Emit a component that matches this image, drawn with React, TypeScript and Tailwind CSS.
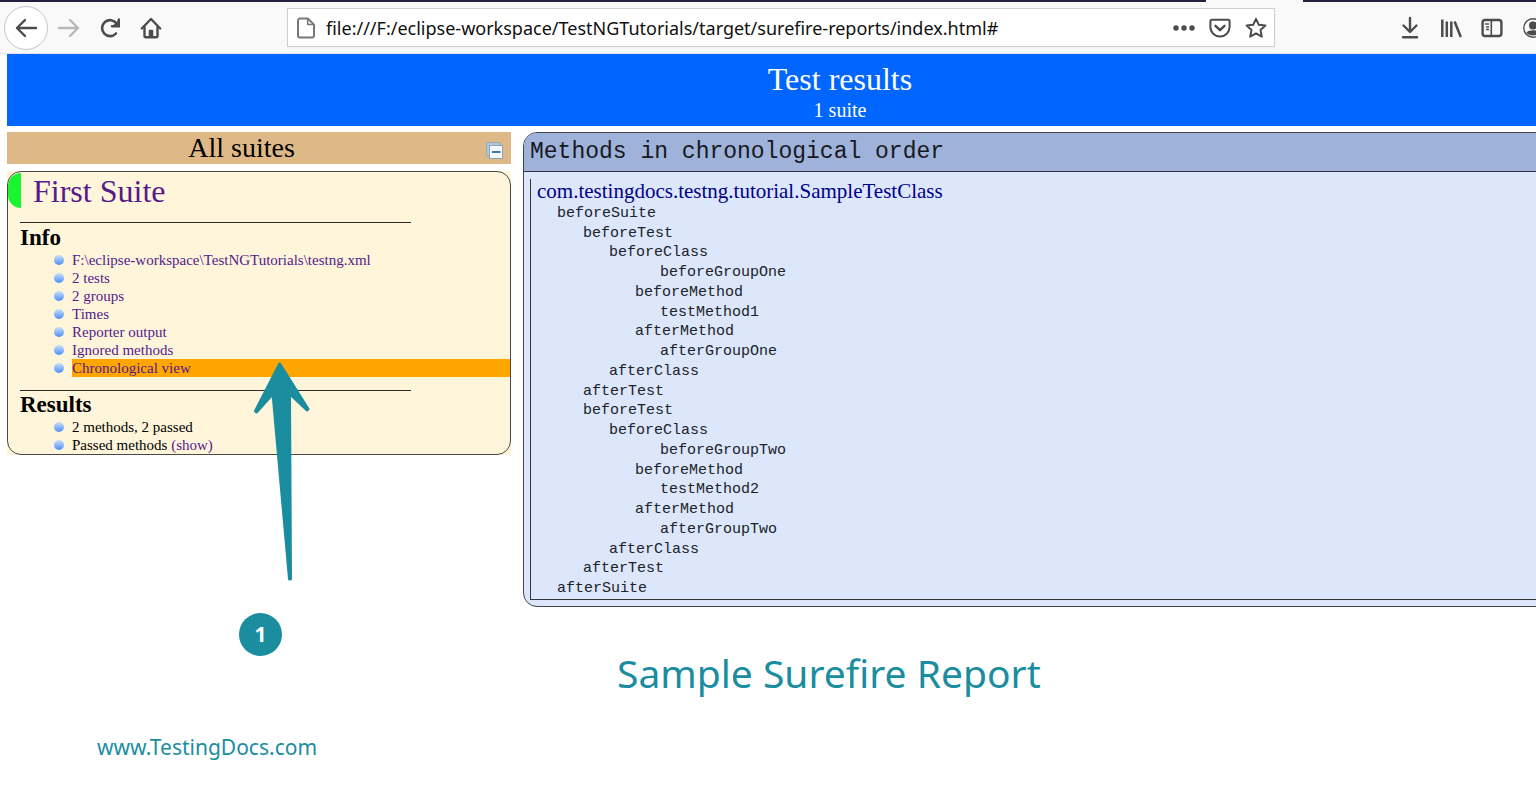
import type { ReactNode } from 'react';

const infoItems = [
    'F:\\eclipse-workspace\\TestNGTutorials\\testng.xml',
    '2 tests',
    '2 groups',
    'Times',
    'Reporter output',
    'Ignored methods',
    'Chronological view',
];

const indents = ['pl-[26px]', 'pl-[52px]', 'pl-[78px]', 'pl-[104px]', 'pl-[129px]'];

const methods: [number, string][] = [
    [0, 'beforeSuite'],
    [1, 'beforeTest'],
    [2, 'beforeClass'],
    [4, 'beforeGroupOne'],
    [3, 'beforeMethod'],
    [4, 'testMethod1'],
    [3, 'afterMethod'],
    [4, 'afterGroupOne'],
    [2, 'afterClass'],
    [1, 'afterTest'],
    [1, 'beforeTest'],
    [2, 'beforeClass'],
    [4, 'beforeGroupTwo'],
    [3, 'beforeMethod'],
    [4, 'testMethod2'],
    [3, 'afterMethod'],
    [4, 'afterGroupTwo'],
    [2, 'afterClass'],
    [1, 'afterTest'],
    [0, 'afterSuite'],
];

function IconButton({ label, children }: { label: string; children: ReactNode }) {
    return (
        <button type="button" aria-label={label} className="flex h-8 w-6 shrink-0 items-center justify-center">
            <svg
                width="24"
                height="24"
                viewBox="0 0 24 24"
                fill="none"
                stroke="currentColor"
                strokeWidth="2.4"
                strokeLinecap="round"
                strokeLinejoin="round"
            >
                {children}
            </svg>
        </button>
    );
}

function Toolbar() {
    return (
        <header className="bg-[#f9f9fa] text-[#4c4c4f]">
            {/* tab strip edge, open under the active tab */}
            <div className="flex h-0.5">
                <div className="flex-1 bg-[#232041]" />
                <div className="w-[97px]" />
                <div className="w-[233px] bg-[#232041]" />
            </div>
            <div className="flex h-[52px] items-center border-b border-[#e3e3e6]">
                <div className="flex w-[287px] shrink-0 items-center gap-[17px] pl-1">
                    <button
                        type="button"
                        aria-label="Back"
                        className="flex h-11 w-11 items-center justify-center rounded-full border border-[#c6c6c8] bg-white"
                    >
                        <svg width="24" height="24" viewBox="0 0 24 24" fill="none" stroke="currentColor" strokeWidth="2.4" strokeLinecap="round" strokeLinejoin="round">
                            <path d="M22 12H3M11 4 3 12l8 8" />
                        </svg>
                    </button>
                    <span className="-ml-2 flex text-[#b9b9bb]">
                        <IconButton label="Forward">
                            <path d="M2 12h19M13 4l8 8-8 8" />
                        </IconButton>
                    </span>
                    <IconButton label="Reload">
                        <path d="M18 17.5A8 8 0 1 1 18.600 7.500" strokeWidth="2.600" />
                        <path d="M20.800 3.500v6.800h-6.800" strokeLinejoin="miter" />
                        <path d="M20.800 4.500v5.800h-5.800z" fill="currentColor" strokeWidth="1" />
                    </IconButton>
                    <IconButton label="Home">
                        <path d="M2.800 12.500 12 3l9.200 9.500" />
                        <path d="M5.500 11v8.700q0 1.500 1.500 1.500h10q1.500 0 1.500-1.500V11" />
                        <path d="M10.500 19.500v-5h3v5z" fill="currentColor" strokeWidth="1.600" />
                    </IconButton>
                </div>
                <div className="flex h-[39px] flex-1 items-center border border-[#cfcfd1] bg-white pr-1.5 pl-1.5 shadow-xs">
                    <IconButton label="Page information">
                        <path d="M6 2.500h7.700L20 8.600v10.900a2 2 0 0 1-2 2H6a2 2 0 0 1-2-2V4.500a2 2 0 0 1 2-2z" stroke="#77777a" strokeWidth="2" />
                        <path d="M13.700 3v5.600H20" stroke="#77777a" strokeWidth="1.500" />
                    </IconButton>
                    <input
                        type="text"
                        aria-label="Address"
                        defaultValue="file:///F:/eclipse-workspace/TestNGTutorials/target/surefire-reports/index.html#"
                        className="ml-2 min-w-0 flex-1 bg-transparent pt-0.5 font-['Noto_Sans',sans-serif] text-[18px] text-[#111] outline-none"
                    />
                    <div className="flex items-center gap-3">
                        <IconButton label="Page actions">
                            <g fill="currentColor" stroke="none">
                                <circle cx="4" cy="12" r="2.700" />
                                <circle cx="12" cy="12" r="2.700" />
                                <circle cx="20" cy="12" r="2.700" />
                            </g>
                        </IconButton>
                        <IconButton label="Save to Pocket">
                            <path d="M3.700 3.800h16.600a1.300 1.300 0 0 1 1.300 1.300V11a9.600 9.600 0 0 1-19.200 0V5.100a1.300 1.300 0 0 1 1.300-1.300z" strokeWidth="2" />
                            <path d="m7.500 9.800 4.500 4.400 4.500-4.400" />
                        </IconButton>
                        <IconButton label="Bookmark">
                            <path d="m12 2.800 2.800 6 6.600.8-4.900 4.500 1.300 6.500-5.800-3.200-5.800 3.200 1.300-6.500-4.900-4.500 6.600-.8z" strokeWidth="2" />
                        </IconButton>
                    </div>
                </div>
                <div className="flex w-[261px] shrink-0 items-center gap-[17px] overflow-hidden pl-[123px]">
                    <IconButton label="Downloads">
                        <path d="M12 2v13.500M5.500 9.500l6.500 6.500 6.500-6.500M5 21.300h14" />
                    </IconButton>
                    <IconButton label="Library">
                        <path d="M3.300 3.500v17.500M7.800 5.500V21M12.300 5.500V21M15.600 5.500 21.800 21" strokeWidth="2.500" strokeLinecap="butt" />
                    </IconButton>
                    <IconButton label="Sidebars">
                        <rect x="2.600" y="4" width="18.800" height="16" rx="2.500" strokeWidth="2.400" />
                        <path d="M11.300 4v16" strokeWidth="1.600" />
                        <path d="M5.500 8h3M6.500 11h2M6.500 13.500h2" strokeWidth="1.300" />
                    </IconButton>
                    <IconButton label="Account">
                        <circle cx="12" cy="12" r="9.200" strokeWidth="1.400" />
                        <circle cx="12" cy="9.500" r="4" fill="currentColor" stroke="none" />
                        <path d="M5.500 16.500c2-3 11-3 13 0-2 4-11 4-13 0z" fill="currentColor" stroke="none" />
                    </IconButton>
                </div>
            </div>
        </header>
    );
}

function Bullet() {
    return <span className="mr-2 ml-[46px] h-2.5 w-2.5 shrink-0 rounded-full bg-linear-to-b from-[#cfe0f6] to-[#4a8bfa]" />;
}

function SuitePanel() {
    return (
        <div className="mt-[7px] bg-[#fff5db]">
            <div className="overflow-hidden rounded-[14px] border border-[#4a4842]">
                <div className="flex h-[37px] items-center">
                    <span className="h-[35px] w-[13px] rounded-l-[13px] bg-[#1bf52f]" />
                    <a href="#" className="ml-3 text-[32px] leading-9 text-[#551a8b]">First Suite</a>
                </div>
                <section className="mt-[13px]">
                    <hr className="ml-3 w-[391px] border-[#2d2b28]" />
                    <h3 className="ml-3 pt-px text-[23px] leading-[27px] font-bold">Info</h3>
                    <ul className="text-[15px] leading-[18px] text-[#551a8b]">
                        {infoItems.map((item) => (
                            <li key={item} className="flex items-center">
                                <Bullet />
                                <span className={item === 'Chronological view' ? 'flex-1 bg-[#ffa500]' : 'flex-1'}>
                                    <a href="#">{item}</a>
                                </span>
                            </li>
                        ))}
                    </ul>
                </section>
                <section className="mt-[13px]">
                    <hr className="ml-3 w-[391px] border-[#2d2b28]" />
                    <h3 className="ml-3 text-[23px] leading-[27px] font-bold">Results</h3>
                    <ul className="text-[15px] leading-[18px]">
                        <li className="flex items-center">
                            <Bullet />
                            2 methods, 2 passed
                        </li>
                        <li className="flex items-center">
                            <Bullet />
                            <span>
                                Passed methods <a href="#" className="text-[#551a8b]">(show)</a>
                            </span>
                        </li>
                    </ul>
                </section>
            </div>
        </div>
    );
}

function MethodsPanel() {
    return (
        <section className="flex-1 overflow-hidden rounded-[14px] border border-[#3f4450] bg-[#dce7fc] font-['Liberation_Mono',monospace]">
            <h2 className="border-b border-[#2b303c] bg-[#9fb3da] pl-1.5 text-[23px] leading-[38px] text-[#16181d]">
                Methods in chronological order
            </h2>
            <div className="mt-[7px] mb-1.5 ml-1.5 border-b border-l border-[#33363d]">
                <h3 className="pl-1.5 font-['Liberation_Serif',serif] text-[21px] leading-[25px] text-[#00008b]">
                    com.testingdocs.testng.tutorial.SampleTestClass
                </h3>
                <ul className="grid h-[395px] auto-rows-fr items-center text-[15px] leading-[18px] text-[#202228]">
                    {methods.map(([depth, name], i) => (
                        <li key={i} className={indents[depth]}>{name}</li>
                    ))}
                </ul>
            </div>
        </section>
    );
}

export default function App() {
    return (
        <div className="overflow-hidden bg-white pb-10 font-['Liberation_Serif',serif] text-black">
            <Toolbar />

            {/* the report is wider than the window and runs off its right side */}
            <main className="-mr-[137px] ml-[7px]">
                <div className="bg-[#0066ff] pt-1.5 pb-1 text-center text-white">
                    <h1 className="text-[32px] leading-[38px]">Test results</h1>
                    <p className="text-[20px] leading-6">1 suite</p>
                </div>
                <div className="mt-1.5 flex gap-3">
                    <div className="relative w-[504px] shrink-0">
                        <div className="flex items-center bg-[#deb887] pr-2">
                            <h2 className="flex-1 text-center text-[28px] leading-8">All suites</h2>
                            <button type="button" aria-label="Collapse all" className="pt-1 pl-2.5">
                                <svg width="17" height="17" viewBox="0 0 17 17" fill="none">
                                    <rect x=".7" y=".7" width="13" height="13" fill="#b5cbd9" stroke="#8ba9c1" />
                                    <rect x="3.500" y="3.500" width="13" height="13" fill="#f3f9fd" stroke="#86a5c0" />
                                    <path d="M6 10h8.500" stroke="#3d7aa8" strokeWidth="2" />
                                </svg>
                            </button>
                        </div>
                        <SuitePanel />

                        {/* callout over the report: arrow and its number */}
                        <svg className="absolute top-[229px] left-[246px]" width="58" height="222" viewBox="0 0 58 222" fill="#1a8d9f" stroke="#1a8d9f" strokeWidth="3" strokeLinejoin="round">
                            <path d="M26.700 3 L55 48 L54 49 L36.500 32.500 L37.500 218 L36.500 218 L20 32.500 L3.500 51 L2.500 50 Z" />
                        </svg>
                        <span className="absolute top-[481px] left-[232px] flex h-[43px] w-[43px] items-center justify-center rounded-full bg-[#1a8d9f] font-['Open_Sans',sans-serif] text-[21px] font-bold text-white">
                            1
                        </span>
                    </div>
                    <MethodsPanel />
                </div>
            </main>

            <footer className="font-['Noto_Sans',sans-serif] text-[#1a8d9f]">
                <p className="mt-[38px] ml-[617px] text-[39px] leading-[56px]">Sample Surefire Report</p>
                <a href="#" className="mt-8 ml-[97px] inline-block text-[21px] leading-7">www.TestingDocs.com</a>
            </footer>
        </div>
    );
}
